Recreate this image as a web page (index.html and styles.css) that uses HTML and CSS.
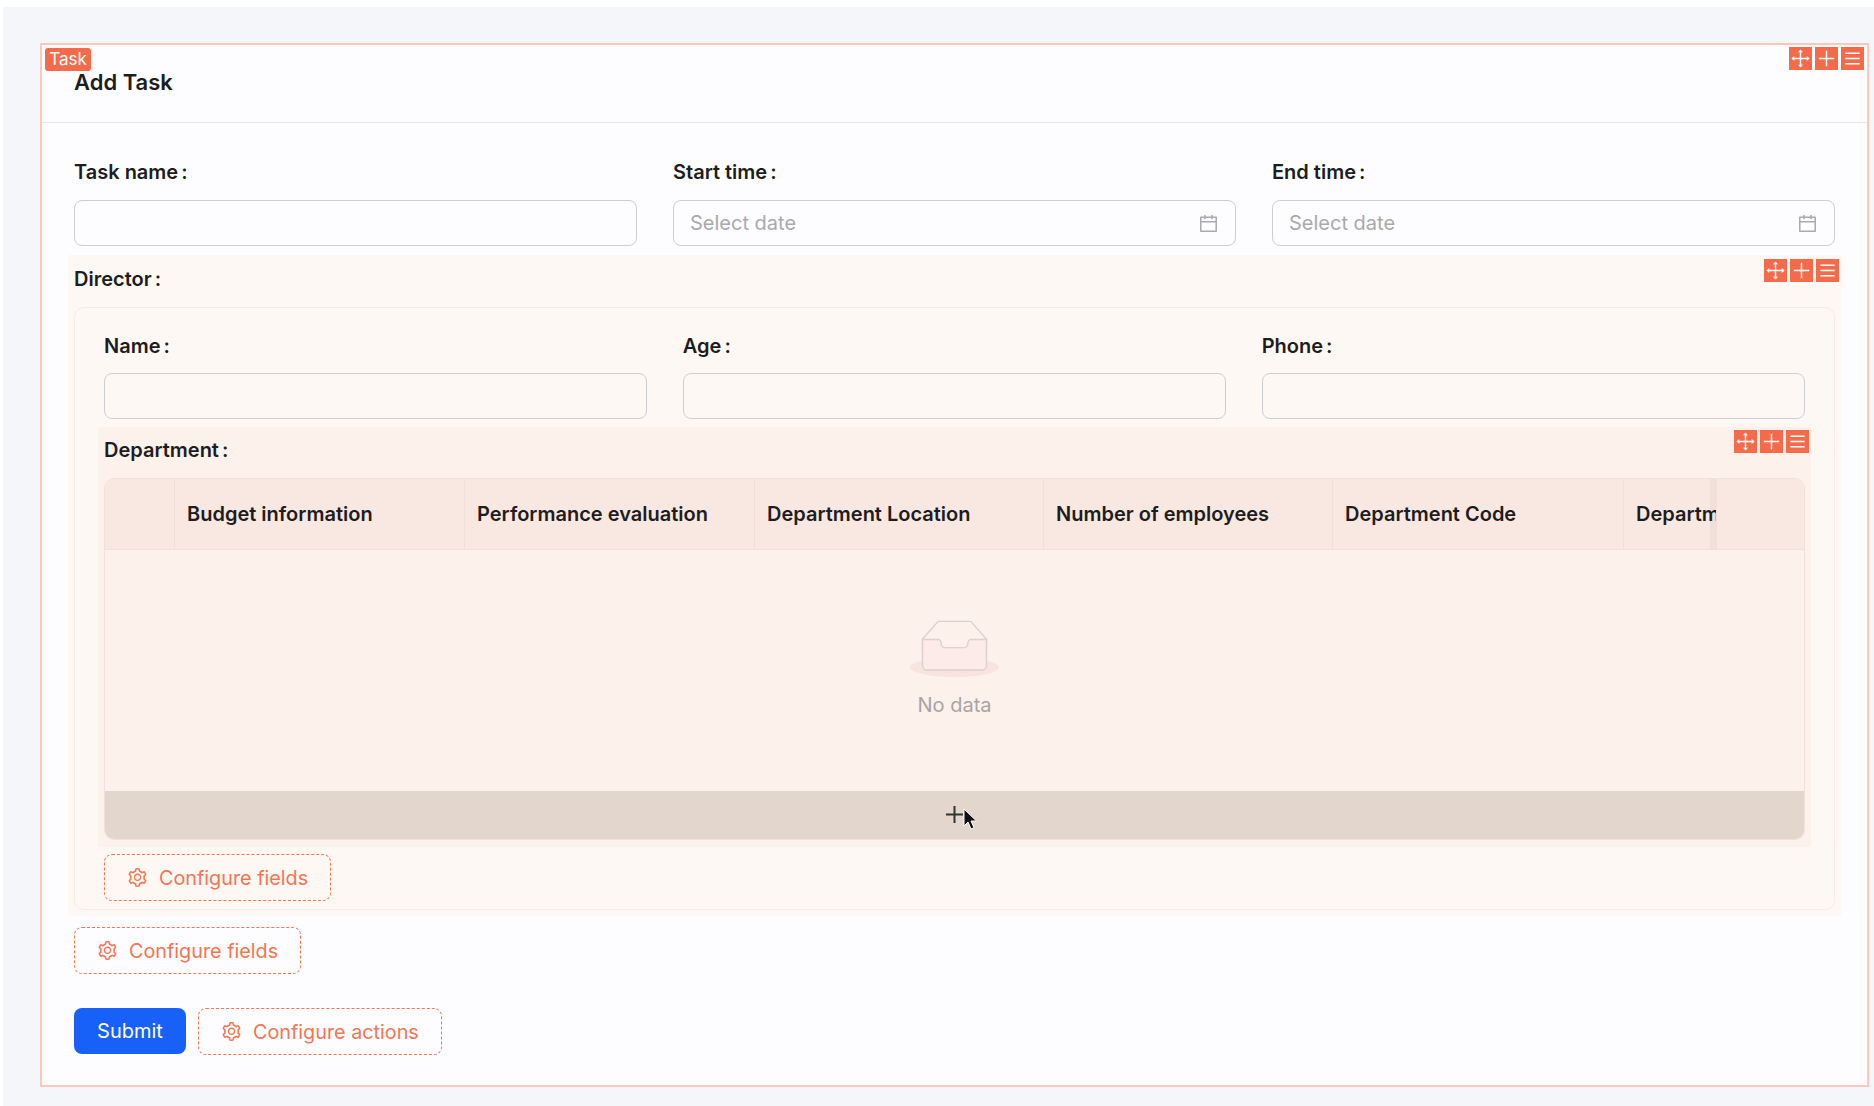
FILE: index.html

```html
<!DOCTYPE html>
<html lang="en">
<head>
  <meta charset="UTF-8" />
  <title>Add Task</title>
  <link rel="stylesheet" href="styles.css">
</head>
<body>
  <svg class="defs" width="0" height="0">
    <symbol id="gear" viewBox="64 64 896 896">
      <path fill="currentColor" d="M924.8 625.7l-65.5-56c3.1-19 4.7-38.4 4.7-57.8s-1.6-38.8-4.7-57.8l65.5-56a32.03 32.03 0 0 0 9.3-35.2l-.9-2.6a443.74 443.74 0 0 0-79.7-137.9l-1.8-2.1a32.12 32.12 0 0 0-35.1-9.5l-81.3 28.9c-30-24.6-63.5-44-99.7-57.6l-15.7-85a32.05 32.05 0 0 0-25.8-25.7l-2.7-.5c-52.1-9.4-106.9-9.4-159 0l-2.7.5a32.05 32.05 0 0 0-25.8 25.7l-15.8 85.4a351.86 351.86 0 0 0-99 57.4l-81.9-29.1a32 32 0 0 0-35.1 9.5l-1.8 2.1a446.02 446.02 0 0 0-79.7 137.9l-.9 2.6c-4.5 12.5-.8 26.5 9.3 35.2l66.3 56.6c-3.1 18.8-4.6 38-4.6 57.1 0 19.2 1.5 38.4 4.6 57.1L99 625.5a32.03 32.03 0 0 0-9.3 35.2l.9 2.6c18.1 50.4 44.9 96.9 79.7 137.9l1.8 2.1a32.12 32.12 0 0 0 35.1 9.5l81.9-29.1c29.8 24.5 63.1 43.9 99 57.4l15.8 85.4a32.05 32.05 0 0 0 25.8 25.7l2.7.5a449.4 449.4 0 0 0 159 0l2.7-.5a32.05 32.05 0 0 0 25.8-25.7l15.7-85a350 350 0 0 0 99.7-57.6l81.3 28.9a32 32 0 0 0 35.1-9.5l1.8-2.1c34.8-41.1 61.6-87.5 79.7-137.9l.9-2.6c4.5-12.3.8-26.3-9.3-35zM788.3 465.9c2.5 15.1 3.8 30.6 3.8 46.1s-1.3 31-3.8 46.1l-6.6 40.1 74.7 63.9a370.03 370.03 0 0 1-42.6 73.6L721 702.8l-31.4 25.8c-23.9 19.6-50.5 35-79.3 45.8l-38.1 14.3-17.9 97a377.5 377.5 0 0 1-85 0l-17.9-97.2-37.8-14.5c-28.5-10.8-55-26.2-78.7-45.7l-31.4-25.9-93.4 33.2c-17-22.9-31.2-47.6-42.6-73.6l75.5-64.5-6.5-40c-2.4-14.9-3.7-30.3-3.7-45.5 0-15.3 1.2-30.6 3.7-45.5l6.5-40-75.5-64.5c11.3-26.1 25.6-50.7 42.6-73.6l93.4 33.2 31.4-25.9c23.7-19.5 50.2-34.9 78.7-45.7l37.9-14.3 17.9-97.2c28.1-3.2 56.8-3.2 85 0l17.9 97 38.1 14.3c28.7 10.8 55.4 26.2 79.3 45.8l31.4 25.8 92.8-32.9c17 22.9 31.2 47.6 42.6 73.6L781.8 426l6.5 39.9zM512 326c-97.2 0-176 78.8-176 176s78.8 176 176 176 176-78.8 176-176-78.8-176-176-176zm79.2 255.2A111.6 111.6 0 0 1 512 614c-29.9 0-58-11.7-79.2-32.8A111.6 111.6 0 0 1 400 502c0-29.9 11.7-58 32.8-79.2C454 401.6 482.1 390 512 390c29.9 0 58 11.6 79.2 32.8A111.6 111.6 0 0 1 624 502c0 29.9-11.7 58-32.8 79.2z"/>
    </symbol>
    <symbol id="calendar" viewBox="64 64 896 896">
      <path fill="currentColor" d="M880 184H712v-64c0-4.4-3.6-8-8-8h-56c-4.4 0-8 3.6-8 8v64H384v-64c0-4.4-3.6-8-8-8h-56c-4.4 0-8 3.6-8 8v64H144c-17.7 0-32 14.3-32 32v664c0 17.7 14.3 32 32 32h736c17.7 0 32-14.3 32-32V216c0-17.7-14.3-32-32-32zm-40 656H184V460h656v380zM184 392V256h128v48c0 4.4 3.6 8 8 8h56c4.4 0 8-3.6 8-8v-48h256v48c0 4.4 3.6 8 8 8h56c4.4 0 8-3.6 8-8v-48h128v136H184z"/>
    </symbol>
    <symbol id="move" viewBox="0 0 24 24">
      <path fill="none" stroke="currentColor" stroke-width="1.5" d="M12 5v14M5 12h14"/>
      <path fill="currentColor" d="M12 2.500l2.600 3H9.400zM12 21.500l-2.600-3h5.200zM2.500 12l3-2.600v5.200zM21.500 12l-3 2.600V9.400z"/>
    </symbol>
    <symbol id="plus" viewBox="0 0 24 24">
      <path fill="none" stroke="currentColor" stroke-width="1.5" d="M12 4v16M4 12h16"/>
    </symbol>
    <symbol id="menu" viewBox="0 0 24 24">
      <path fill="none" stroke="currentColor" stroke-width="1.5" d="M4.500 6.500h15M4.500 12h15M4.500 17.500h15"/>
    </symbol>
  </svg>

  <div class="page">
    <div class="card">
      <span class="badge">Task</span>
      <div class="tools">
        <span class="tool"><svg><use href="#move"/></svg></span>
        <span class="tool"><svg><use href="#plus"/></svg></span>
        <span class="tool"><svg><use href="#menu"/></svg></span>
      </div>

      <div class="card-head">Add Task</div>

      <div class="card-body">
        <div class="row">
          <div class="field">
            <label class="label">Task name<span class="colon">:</span></label>
            <div class="input"></div>
          </div>
          <div class="field">
            <label class="label">Start time<span class="colon">:</span></label>
            <div class="input">
              <span class="placeholder">Select date</span>
              <svg class="cal"><use href="#calendar"/></svg>
            </div>
          </div>
          <div class="field">
            <label class="label">End time<span class="colon">:</span></label>
            <div class="input">
              <span class="placeholder">Select date</span>
              <svg class="cal"><use href="#calendar"/></svg>
            </div>
          </div>
        </div>

        <div class="director">
          <div class="tools">
            <span class="tool"><svg><use href="#move"/></svg></span>
            <span class="tool"><svg><use href="#plus"/></svg></span>
            <span class="tool"><svg><use href="#menu"/></svg></span>
          </div>
          <label class="label director-label">Director<span class="colon">:</span></label>

          <div class="box">
            <div class="row row-inner">
              <div class="field">
                <label class="label">Name<span class="colon">:</span></label>
                <div class="input"></div>
              </div>
              <div class="field">
                <label class="label">Age<span class="colon">:</span></label>
                <div class="input"></div>
              </div>
              <div class="field">
                <label class="label">Phone<span class="colon">:</span></label>
                <div class="input"></div>
              </div>
            </div>

            <div class="department">
              <div class="tools">
                <span class="tool"><svg><use href="#move"/></svg></span>
                <span class="tool"><svg><use href="#plus"/></svg></span>
                <span class="tool"><svg><use href="#menu"/></svg></span>
              </div>
              <label class="label department-label">Department<span class="colon">:</span></label>

              <div class="table">
                <div class="thead">
                  <div class="th"></div>
                  <div class="th">Budget information</div>
                  <div class="th">Performance evaluation</div>
                  <div class="th">Department Location</div>
                  <div class="th">Number of employees</div>
                  <div class="th">Department Code</div>
                  <div class="th th-clip">Department Name</div>
                  <div class="th th-last"></div>
                </div>
                <div class="empty">
                  <svg class="empty-icon" viewBox="0 0 64 41">
                    <g transform="translate(0 1)" fill="none" fill-rule="evenodd">
                      <ellipse fill="#f9e3df" cx="32" cy="33" rx="32" ry="7"/>
                      <g fill-rule="nonzero" stroke="#dcd0d0">
                        <path d="M55 12.76L44.854 1.258C44.367.474 43.656 0 42.907 0H21.093c-.749 0-1.46.474-1.947 1.257L9 12.761V22h46v-9.24z"/>
                        <path d="M41.613 15.931c0-1.605.994-2.93 2.227-2.931H55v18.137C55 33.26 53.68 35 52.05 35h-40.1C10.32 35 9 33.259 9 31.137V13h11.16c1.233 0 2.227 1.323 2.227 2.928v.022c0 1.605 1.005 2.901 2.237 2.901h14.752c1.232 0 2.237-1.308 2.237-2.913v-.007z" fill="#fcebe6"/>
                      </g>
                    </g>
                  </svg>
                  <div class="empty-text">No data</div>
                </div>
                <div class="add-bar">
                  <svg class="add-plus" viewBox="0 0 17 17"><path fill="none" stroke="#333" stroke-width="2" d="M8.500 0v17M0 8.500h17"/></svg>
                  <svg class="pointer" viewBox="0 0 14 23"><path fill="#111" stroke="#fff" stroke-width="1" d="M1 1v17l4-4 3 7 3-1.300-3-6.700h5.500z"/></svg>
                </div>
              </div>
            </div>

            <button class="dashed dashed-inner" type="button"><svg><use href="#gear"/></svg>Configure fields</button>
          </div>
        </div>

        <button class="dashed dashed-outer" type="button"><svg><use href="#gear"/></svg>Configure fields</button>

        <div class="actions">
          <button class="submit" type="button">Submit</button>
          <button class="dashed" type="button"><svg><use href="#gear"/></svg>Configure actions</button>
        </div>
      </div>
    </div>
  </div>
</body>
</html>
```

FILE: styles.css

```css
* {
  box-sizing: border-box;
}
html, body {
  height: 100%;
}
body {
  margin: 0;
  background: #fff;
  font-family: Inter, "Liberation Sans", sans-serif;
  font-size: 20px;
  color: #1d1d20;
  overflow: hidden;
}
.defs {
  display: block;
  height: 0;
}
.page {
  margin: 7px 0 0 3px;
  height: 1099px;
  padding: 36px 5px 0 37px;
  background: #f5f6f9;
}
.card {
  position: relative;
  height: 1044px;
  background: #fdfdff;
  border: 2px solid #fdc9bd;
}
.badge {
  position: absolute;
  left: 3px;
  top: 3px;
  width: 46px;
  height: 23px;
  background: #f36b4a;
  color: #fff;
  border-radius: 3px;
  font-size: 17px;
  line-height: 23px;
  text-align: center;
}
.tools {
  position: absolute;
  right: 3px;
  top: 2px;
  display: flex;
  gap: 3px;
}
.tool {
  width: 23px;
  height: 23px;
  background: #f36b4a;
  color: #fff;
}
.tool svg {
  display: block;
  width: 23px;
  height: 23px;
}
.card-head {
  height: 78px;
  padding: 21px 0 0 32px;
  border-bottom: 1px solid #e9e6df;
  font-size: 22px;
  font-weight: 600;
  line-height: 32px;
}
.card-body {
  padding: 37px 32px 0;
}
.row {
  display: grid;
  grid-template-columns: repeat(3, 1fr);
  column-gap: 36px;
}
.row-inner {
  column-gap: 35.5px;
}
.label {
  display: block;
  height: 24px;
  margin-bottom: 16px;
  font-size: 20px;
  font-weight: 600;
  line-height: 24px;
}
.colon {
  margin-left: 3px;
}
.input {
  display: flex;
  align-items: center;
  justify-content: space-between;
  height: 46px;
  padding: 0 17px 0 16px;
  border: 1px solid #cdcdd4;
  border-radius: 8px;
}
.placeholder {
  color: #a9a9ad;
  font-size: 20px;
}
.cal {
  width: 19px;
  height: 19px;
  color: #a9a9b0;
}
.director {
  position: relative;
  margin: 9px -6px 0;
  padding: 12px 6px 6px;
  background: #fef8f5;
}
.director .tools {
  right: 2px;
  top: 4px;
}
.box {
  padding: 26px 29px 8px;
  border: 1px solid #f8e9e4;
  border-radius: 10px;
}
.box .label {
  margin-bottom: 15px;
}
.department {
  position: relative;
  margin: 8px -6px 0 -6px;
  padding: 11px 6px 7px;
  background: #fdf1ec;
}
.department .tools {
  right: 2px;
  top: 3px;
}
.department .label.department-label {
  margin-bottom: 16px;
}
.table {
  border: 1px solid #f4e0da;
  border-radius: 10px;
  overflow: hidden;
}
.thead {
  display: grid;
  grid-template-columns: 70px 290px 290px 289px 289px 291px 93px 1fr;
  height: 71px;
  background: #f9e8e2;
  border-bottom: 1px solid #f2dfd8;
}
.th {
  padding-left: 12px;
  border-right: 1px solid #f2dfd8;
  font-size: 20px;
  font-weight: 600;
  line-height: 70px;
  white-space: nowrap;
  overflow: hidden;
}
.th-clip {
  box-shadow: inset -7px 0 0 -1px #f0dfda;
}
.th-last {
  border-right: 0;
}
.empty {
  display: flex;
  flex-direction: column;
  align-items: center;
  height: 241px;
  padding-top: 70px;
}
.empty-icon {
  width: 89px;
  height: 57px;
}
.empty-text {
  margin-top: 15px;
  color: #a9a4a5;
  font-size: 20px;
  line-height: 26px;
}
.add-bar {
  position: relative;
  height: 48px;
  background: #e3d6cd;
}
.add-plus {
  position: absolute;
  left: 841px;
  top: 15px;
  width: 17px;
  height: 17px;
}
.pointer {
  position: absolute;
  left: 858px;
  top: 17px;
  width: 14px;
  height: 23px;
}
.dashed {
  display: inline-flex;
  align-items: center;
  height: 47px;
  padding: 0 22px 0 23px;
  background: transparent;
  border: 1px dashed #f37552;
  border-radius: 8px;
  color: #f37552;
  font-family: inherit;
  font-size: 19.8px;
}
.dashed svg {
  width: 19px;
  height: 19px;
  margin-right: 12px;
}
.dashed-inner {
  display: flex;
  margin-top: 7px;
}
.dashed-outer {
  display: flex;
  margin-top: 11px;
}
.actions {
  display: flex;
  gap: 12px;
  margin-top: 34px;
}
.submit {
  width: 112px;
  height: 46px;
  background: #1761f8;
  border: 0;
  border-radius: 8px;
  color: #fff;
  font-family: inherit;
  font-size: 20px;
}
```
